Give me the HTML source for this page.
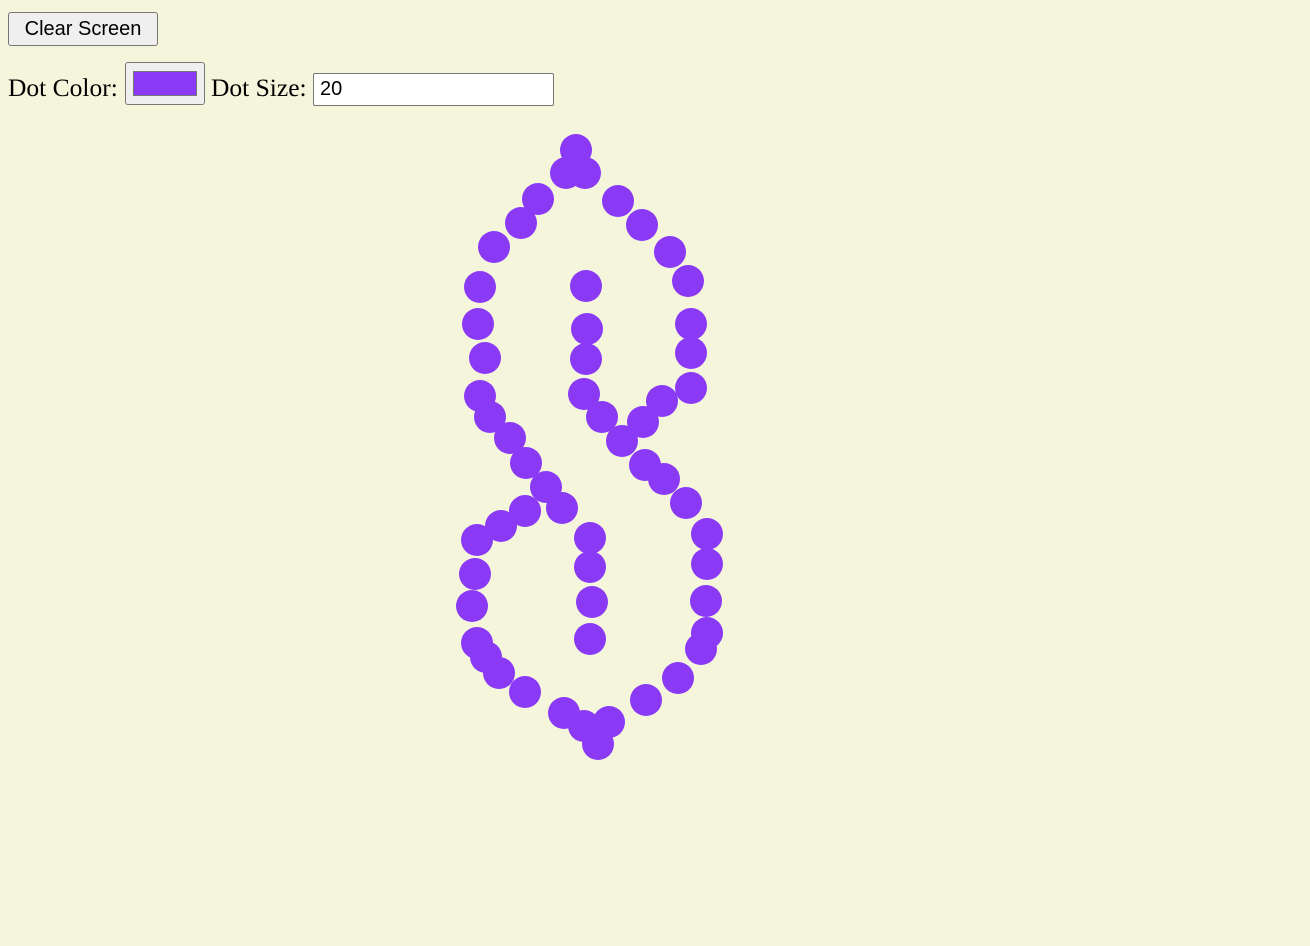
<!DOCTYPE html>
<html><head><style>
html,body{margin:0;background:#f5f5dc;width:1310px;height:946px;overflow:hidden;position:relative}
.btn{position:absolute;left:8px;top:12px;width:150px;height:34px;box-sizing:border-box;border:1px solid #767676;border-radius:3px;background:#efefef;font:20px "Liberation Sans",sans-serif;text-align:center;line-height:32px;color:#000}
.lbl{position:absolute;top:71px;font:25.5px "Liberation Serif",serif;color:#000;line-height:34px}
.col{position:absolute;left:125px;top:62px;width:80px;height:43px;box-sizing:border-box;border:1px solid #767676;border-radius:3px;background:#efefef}
.col i{position:absolute;left:7px;top:8px;width:64px;height:25px;background:#8a3af5;border:1px solid #777;box-sizing:border-box}
.inp{position:absolute;left:313px;top:73px;width:241px;height:33px;box-sizing:border-box;border:1px solid #767676;border-radius:2px;background:#fff;font:20px "Liberation Sans",sans-serif;padding-left:6px;line-height:31px}
.d{position:absolute;width:32px;height:32px;border-radius:50%;background:#8a3af5;margin:-16px 0 0 -16px}
</style></head><body>
<div class="btn">Clear Screen</div>
<div class="lbl" style="left:8px">Dot Color:</div>
<div class="col"><i></i></div>
<div class="lbl" style="left:211px">Dot Size:</div>
<div class="inp">20</div>
<div id="c"></div>
<script>
var p=[[576,150],[566,173],[585,173],[538,199],[521,223],[494,247],[618,201],[642,225],[670,252],[688,281],[480,287],[478,324],[485,358],[480,396],[490,417],[510,438],[526,463],[546,487],[562,508],[525,511],[501,526],[477,540],[475,574],[472,606],[477,643],[486,657],[499,673],[525,692],[564,713],[584,726],[598,744],[609,722],[646,700],[678,678],[701,649],[707,633],[706,601],[707,564],[707,534],[686,503],[664,479],[645,465],[622,441],[643,422],[662,401],[691,388],[691,353],[691,324],[586,286],[587,329],[586,359],[584,394],[602,417],[590,538],[590,567],[592,602],[590,639]];
var h='';p.forEach(function(a){h+='<div class="d" style="left:'+a[0]+'px;top:'+a[1]+'px"></div>'});
document.getElementById('c').innerHTML=h;
</script>
</body></html>
